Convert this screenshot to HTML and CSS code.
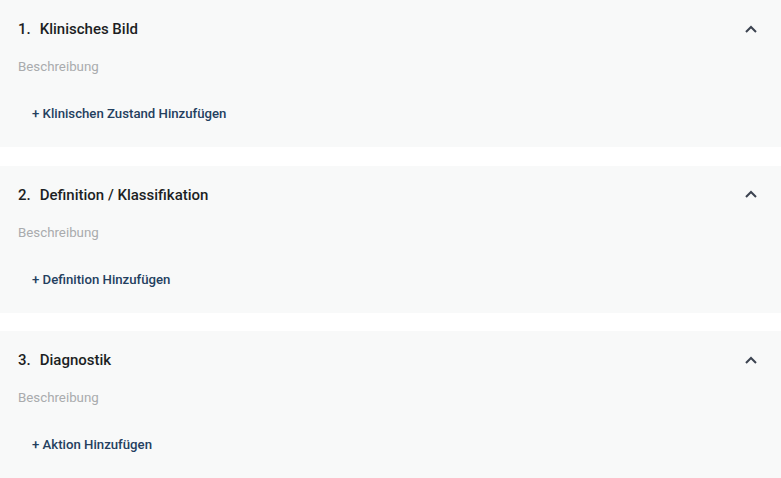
FILE: index.html
```html
<!DOCTYPE html>
<html>
    <head>
        <link rel="stylesheet" href="styles.css">
    </head>
    <body>
        <div class="sections">
            <div class="section">
                <div class="section-head">
                    <div class="title"><span class="num">1.</span>Klinisches Bild</div>
                    <svg class="chevron" width="12" height="8" viewBox="0 0 12 8">
                        <path d="M1 7 L6 2 L11 7" fill="none" stroke="#3c4350" stroke-width="2"/>
                    </svg>
                </div>
                <div class="desc">Beschreibung</div>
                <a class="add" href="#">+ Klinischen Zustand Hinzufügen</a>
            </div>
            <div class="section">
                <div class="section-head">
                    <div class="title"><span class="num">2.</span>Definition / Klassifikation</div>
                    <svg class="chevron" width="12" height="8" viewBox="0 0 12 8">
                        <path d="M1 7 L6 2 L11 7" fill="none" stroke="#3c4350" stroke-width="2"/>
                    </svg>
                </div>
                <div class="desc">Beschreibung</div>
                <a class="add" href="#">+ Definition Hinzufügen</a>
            </div>
            <div class="section">
                <div class="section-head">
                    <div class="title"><span class="num">3.</span>Diagnostik</div>
                    <svg class="chevron" width="12" height="8" viewBox="0 0 12 8">
                        <path d="M1 7 L6 2 L11 7" fill="none" stroke="#3c4350" stroke-width="2"/>
                    </svg>
                </div>
                <div class="desc">Beschreibung</div>
                <a class="add" href="#">+ Aktion Hinzufügen</a>
            </div>
        </div>
    </body>
</html>
```
FILE: styles.css
```css
body {
    margin: 0;
    background: #ffffff;
    font-family: Roboto, "Liberation Sans", sans-serif;
}

.sections {
    display: flex;
    flex-direction: column;
    gap: 18.5px;
}

.section {
    background: #f8f9f9;
    height: 147px;
    box-sizing: border-box;
    padding: 19px 24px 0 18px;
    display: flex;
    flex-direction: column;
    align-items: flex-start;
}

.section-head {
    display: flex;
    justify-content: space-between;
    align-items: center;
    align-self: stretch;
    height: 20px;
}

.title {
    font-size: 15px;
    font-weight: 500;
    color: #1c1f24;
}

.num {
    margin-right: 9px;
}

.chevron {
    display: block;
    margin-top: -1px;
}

.desc {
    margin-top: 20px;
    font-size: 13.3px;
    color: #a9abad;
}

.add {
    margin-top: 32px;
    margin-left: 14px;
    font-size: 13.2px;
    font-weight: 500;
    color: #24405f;
    text-decoration: none;
}
```
